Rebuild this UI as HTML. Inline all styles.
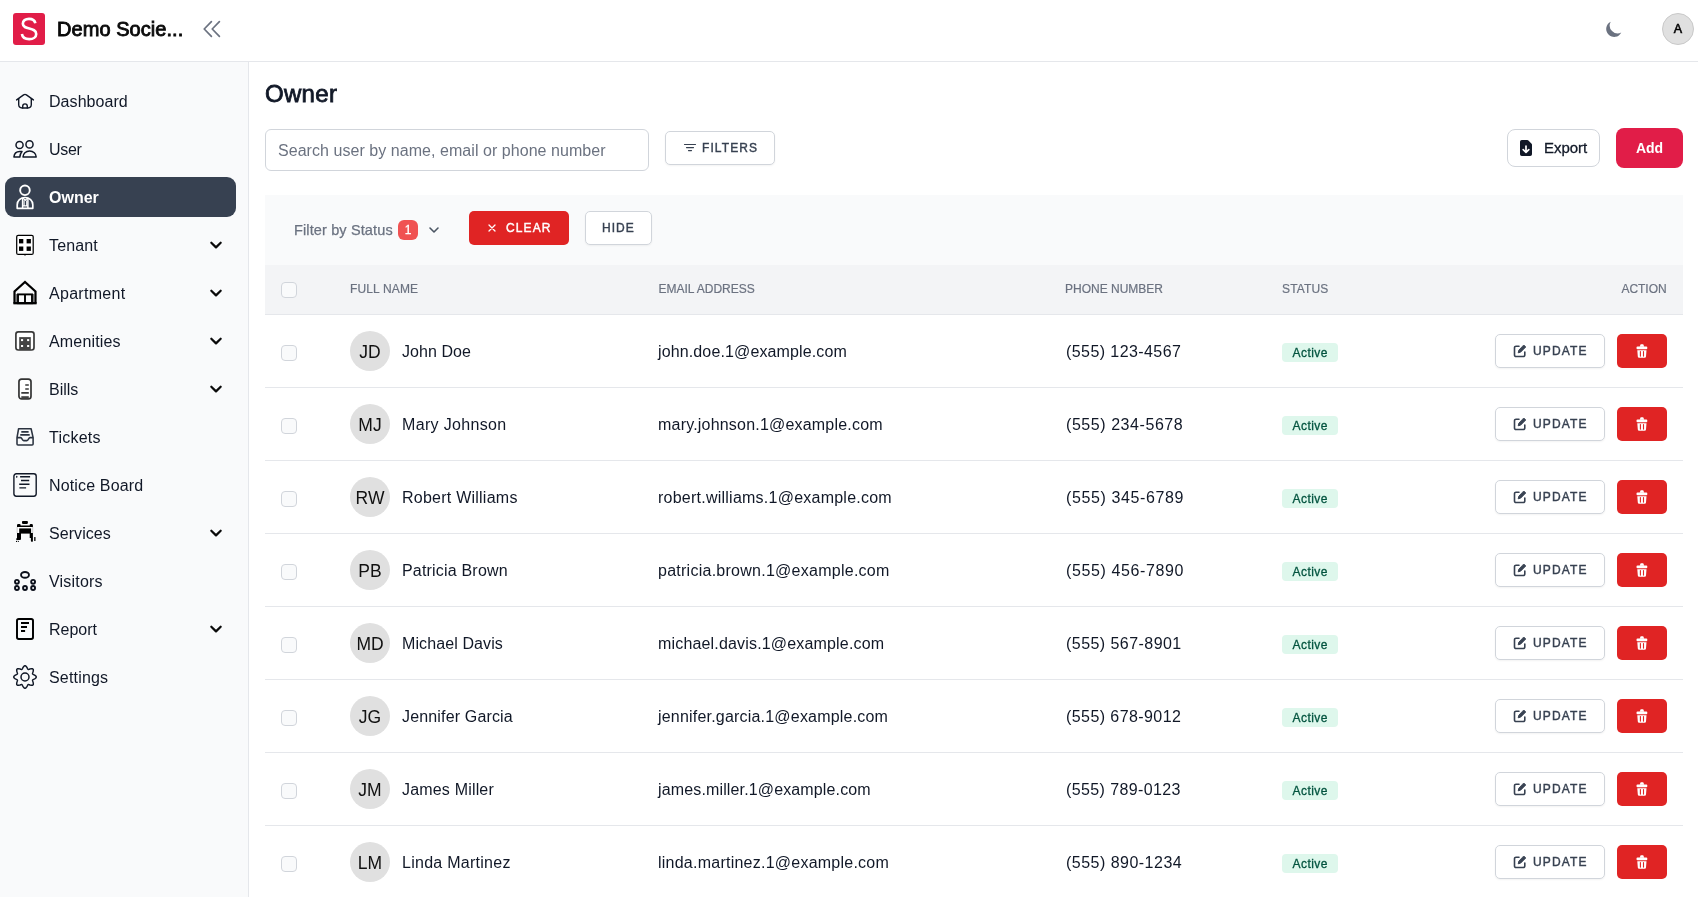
<!DOCTYPE html>
<html><head><meta charset="utf-8"><title>Owner</title>
<style>
*{box-sizing:border-box;margin:0;padding:0}
html,body{width:1698px;height:897px;overflow:hidden;background:#fff;font-family:"Liberation Sans",sans-serif;color:#111827}
.abs{position:absolute}
#w{position:absolute;left:0;top:0;width:1698px;height:897px;will-change:transform}
.md{font-weight:400;-webkit-text-stroke:0.4px currentColor}
#top{position:absolute;left:0;top:0;width:1698px;height:62px;background:#fff;border-bottom:1px solid #e5e7eb}
#side{position:absolute;left:0;top:62px;width:249px;height:835px;background:#f9fafb;border-right:1px solid #e5e7eb}
.logo{position:absolute;left:13px;top:13px;width:32px;height:32px;border-radius:3px;background:#e11d48}
.brand{position:absolute;left:57px;top:17px;font-size:20px;font-weight:400;-webkit-text-stroke:0.85px #0a0a0a;color:#0a0a0a;letter-spacing:0.05px;white-space:nowrap;line-height:24px}
.nav{position:absolute;left:49px;font-size:16px;color:#111827;white-space:nowrap;line-height:20px}
.ico{position:absolute;left:13px;width:24px;height:24px;overflow:visible}
.chev{position:absolute;left:208px;width:16px;height:16px}
#active{position:absolute;left:5px;top:177px;width:231px;height:40px;border-radius:9px;background:#374151}
h1{position:absolute;left:265px;top:80px;font-size:24px;font-weight:400;-webkit-text-stroke:0.8px #111827;color:#111827;letter-spacing:0.3px;line-height:28px}
.search{position:absolute;left:265px;top:129px;width:384px;height:42px;border:1px solid #d1d5db;border-radius:6px;background:#fff}
.search span{position:absolute;left:12px;top:11px;font-size:16px;color:#6b7280;white-space:nowrap;line-height:20px;letter-spacing:0.05px}
.btn{position:absolute;border:1px solid #d1d5db;border-radius:5px;background:#fff;box-shadow:0 1px 2px rgba(0,0,0,.05)}
.btn span{position:absolute;white-space:nowrap}
#fbar{position:absolute;left:265px;top:195px;width:1418px;height:70px;background:#f9fafb}
#thead{position:absolute;left:265px;top:265px;width:1418px;height:50px;background:#f3f4f6;border-bottom:1px solid #e5e7eb}
.th{position:absolute;top:282px;font-size:12px;color:#6b7280;-webkit-text-stroke:0.2px #6b7280;letter-spacing:0.15px;white-space:nowrap;line-height:14px}
.row{position:absolute;left:265px;width:1418px;height:73px;border-bottom:1px solid #e5e7eb}
.cb{position:absolute;left:16px;top:30px;width:16px;height:16px;border:1px solid #d1d5db;border-radius:4px;background:#f9fafb}
.av{position:absolute;left:85px;top:16px;width:40px;height:40px;border-radius:50%;background:#e0e0e0;text-align:center;line-height:42px;font-size:17.5px;color:#111}
.nm,.em,.ph{position:absolute;top:27px;font-size:16px;color:#111827;white-space:nowrap;line-height:20px}
.nm{left:137px;letter-spacing:0.15px}.em{left:393px;letter-spacing:0.2px}.ph{left:801px;letter-spacing:0.5px}
.st{position:absolute;left:1017px;top:28px;width:56px;height:19px;border-radius:4px;background:#def7ec;color:#03543f;font-size:12px;text-align:center;line-height:20px;letter-spacing:0.45px;text-indent:0.45px;-webkit-text-stroke:0.3px #03543f}
.up{position:absolute;left:1230px;top:19px;width:110px;height:34px;border:1px solid #d1d5db;border-radius:5px;background:#fff;box-shadow:0 1px 2px rgba(0,0,0,.05)}
.up span{position:absolute;left:37px;top:9px;font-size:12px;font-weight:400;-webkit-text-stroke:0.4px #374151;color:#374151;letter-spacing:1.15px;line-height:14px}
.up svg{position:absolute;left:17px;top:9px}
.del{position:absolute;left:1352px;top:19px;width:50px;height:34px;border-radius:5px;background:#e02424}
.del svg{position:absolute;left:19.3px;top:10px}
</style></head><body>
<div id="w">
<div id="top">
<div class="logo"><svg width="32" height="32" viewBox="0 0 32 32"><path transform="translate(16 16) scale(1.060) translate(-16.200 -16)" d="M22.2 10.6c-.5-2.6-2.8-4.2-6-4.2-3.4 0-5.8 1.8-5.8 4.6 0 6.200 12.600 2.900 12.600 9.600 0 3.100-2.800 5.000-6.600 5.000-3.700 0-6.400-1.800-6.900-4.800" fill="none" stroke="#fff" stroke-width="2.5"/></svg></div>
<div class="brand">Demo Socie...</div>
<svg class="abs" style="left:202px;top:19px" width="22" height="20" viewBox="0 0 22 20" fill="none" stroke="#6b7280" stroke-width="1.700" stroke-linecap="round" stroke-linejoin="round"><path d="M9.4 2.6L2.2 10l7.2 7.4"/><path d="M17.4 2.6L10.2 10l7.200 7.4"/></svg>
<svg class="abs" style="left:1604px;top:19px" width="20" height="20" viewBox="0 0 20 20"><path d="M17.3 13.6A8 8 0 0 1 6.7 2.7a8 8 0 1 0 10.6 10.9z" fill="#6b7280"/></svg>
<div class="abs" style="left:1662px;top:13px;width:32px;height:32px;border-radius:50%;background:#e0e0e0;border:1px solid #c9c9c9;text-align:center;line-height:31px;font-size:12.5px;color:#000;-webkit-text-stroke:0.55px #000">A</div>
</div>
<div id="side"></div>
<div id="active"></div>
<div class="nav" style="top:92px;letter-spacing:0.06px">Dashboard</div>
<div class="nav" style="top:140px;letter-spacing:-0.30px">User</div>
<div class="nav" style="top:188px;color:#fff;font-weight:700">Owner</div>
<div class="nav" style="top:236px;letter-spacing:0.15px">Tenant</div>
<svg class="chev" style="top:237px" viewBox="0 0 16 16" fill="none" stroke="#0a0a0a" stroke-width="2.2" stroke-linecap="round" stroke-linejoin="round"><path d="M3.300 5.700L8 10.400l4.700-4.700"/></svg>
<div class="nav" style="top:284px;letter-spacing:0.30px">Apartment</div>
<svg class="chev" style="top:285px" viewBox="0 0 16 16" fill="none" stroke="#0a0a0a" stroke-width="2.2" stroke-linecap="round" stroke-linejoin="round"><path d="M3.300 5.700L8 10.400l4.700-4.700"/></svg>
<div class="nav" style="top:332px;letter-spacing:0.16px">Amenities</div>
<svg class="chev" style="top:333px" viewBox="0 0 16 16" fill="none" stroke="#0a0a0a" stroke-width="2.2" stroke-linecap="round" stroke-linejoin="round"><path d="M3.300 5.700L8 10.400l4.700-4.700"/></svg>
<div class="nav" style="top:380px;letter-spacing:0.00px">Bills</div>
<svg class="chev" style="top:381px" viewBox="0 0 16 16" fill="none" stroke="#0a0a0a" stroke-width="2.2" stroke-linecap="round" stroke-linejoin="round"><path d="M3.300 5.700L8 10.400l4.700-4.700"/></svg>
<div class="nav" style="top:428px;letter-spacing:0.23px">Tickets</div>
<div class="nav" style="top:476px;letter-spacing:0.15px">Notice Board</div>
<div class="nav" style="top:524px;letter-spacing:0.07px">Services</div>
<svg class="chev" style="top:525px" viewBox="0 0 16 16" fill="none" stroke="#0a0a0a" stroke-width="2.2" stroke-linecap="round" stroke-linejoin="round"><path d="M3.300 5.700L8 10.400l4.700-4.700"/></svg>
<div class="nav" style="top:572px;letter-spacing:0.19px">Visitors</div>
<div class="nav" style="top:620px;letter-spacing:0.00px">Report</div>
<svg class="chev" style="top:621px" viewBox="0 0 16 16" fill="none" stroke="#0a0a0a" stroke-width="2.2" stroke-linecap="round" stroke-linejoin="round"><path d="M3.300 5.700L8 10.400l4.700-4.700"/></svg>
<div class="nav" style="top:668px;letter-spacing:0.18px">Settings</div>
<svg class="ico" style="top:89px" viewBox="0 0 24 24"><g fill="none" stroke="#111827" stroke-width="1.4" stroke-linecap="round" stroke-linejoin="round"><path d="M3.6 10.9 L10.6 5.9 Q12 4.9 13.4 5.9 L20.4 10.9"/><path d="M5.7 9.6V15.6a3.4 3.400 0 0 0 3.4 3.4H14.9a3.4 3.400 0 0 0 3.4-3.400V9.600"/><path d="M9.700 18.900v-1.700a2.300 2.300 0 0 1 4.600 0V18.900"/></g></svg>
<svg class="ico" style="top:137px" viewBox="0 0 24 24"><g fill="none" stroke="#111827" stroke-width="1.500" stroke-linejoin="round"><circle cx="6.550" cy="7.950" r="3.550"/><circle cx="16.500" cy="7.400" r="3.550"/><path d="M10 20.100c0-3.400 2.900-6.100 6.600-6.100s6.600 2.700 6.600 6.100z"/><path d="M0.900 20.100c0.300-3.300 2.700-5.600 5.900-5.600h2.200c-1.300 1.500-2 3.300-2.200 5.600z"/></g></svg>
<svg class="ico" style="top:185px" viewBox="0 0 24 24"><g fill="none" stroke="#fff" stroke-width="1.700" stroke-linejoin="round"><circle cx="11.950" cy="5.300" r="4.800" stroke-width="1.900"/><path d="M4.200 23.300v-3.500c0-4.300 3.300-7.300 7.800-7.300s7.800 3 7.800 7.300v3.500z"/><path d="M9.600 13V23M14.900 13V23" stroke-width="1.500"/><path d="M10 13l2.300 2.400L14.700 13M11.100 15.500v5.200M13.700 15.500v5.200M10 20.900h4.800" stroke-width="1.100"/></g></svg>
<svg class="ico" style="top:233px" viewBox="0 0 24 24"><rect x="3.700" y="2.300" width="16.500" height="19.100" rx="1.500" fill="#fff" stroke="#000" stroke-width="1.250"/><path d="M11 22.100h2" stroke="#000" stroke-width="0.600"/><g fill="#000"><rect x="6" y="6" width="4.300" height="4.400"/><rect x="13.600" y="6" width="4.300" height="4.400"/><rect x="6" y="13.500" width="4.300" height="4.400"/><rect x="13.600" y="13.500" width="4.300" height="4.400"/></g></svg>
<svg class="ico" style="top:281px" viewBox="0 0 24 24"><g fill="none" stroke="#000" stroke-linejoin="miter"><path d="M3.400 13V22M20.600 13V22" stroke="#777" stroke-width="1.400"/><path d="M1.500 22.500V10.500L12 1L22.500 10.500V22.500" stroke-width="2.200"/><path d="M0.400 22.200H23.600" stroke-width="2.300"/><rect x="5" y="13.400" width="14" height="8.800" stroke-width="1.900"/><path d="M12 13.400V22.500" stroke-width="1.900"/></g></svg>
<svg class="ico" style="top:329px" viewBox="0 0 24 24"><rect x="2.900" y="2.900" width="18.100" height="18.100" rx="2.400" fill="#fff" stroke="#3a3a3a" stroke-width="1.700"/><rect x="6.200" y="8.100" width="11.600" height="13" fill="#444"/><g fill="#fff"><rect x="8" y="10.100" width="2.100" height="2"/><rect x="14.100" y="10.100" width="2.100" height="2"/><rect x="8" y="16" width="2.100" height="2"/><rect x="14.100" y="16" width="2.100" height="2"/></g></svg>
<svg class="ico" style="top:377px" viewBox="0 0 24 24"><rect x="5.950" y="2.050" width="12.050" height="19.900" rx="2.700" fill="#fff" stroke="#333" stroke-width="1.700"/><rect x="8.300" y="19.200" width="7.500" height="2.500" fill="#444"/><path d="M12.250 8h3.550M12.250 12h3.550M8.300 15.900h7.500" stroke="#3a3a3a" stroke-width="1.600" fill="none"/></svg>
<svg class="ico" style="top:425px" viewBox="0 0 24 24"><g fill="none" stroke="#2b3340" stroke-width="1.550" stroke-linejoin="round"><path d="M5.600 3.750h12.500l2 8.850v6.400a1 1 0 0 1-1 1H5a1 1 0 0 1-1-1v-6.400z"/><path d="M4 12.600h3.700c1.300 0 1.300 3 3 3h3.200c1.700 0 1.700-3 3-3H20.100"/><path d="M8.300 6.900h7.300M7.250 9.900h9.450" stroke-width="1.600"/></g></svg>
<svg class="ico" style="top:473px" viewBox="0 0 24 24"><g fill="none" stroke="#111827" stroke-width="1.400"><rect x="0.900" y="0.800" width="22.300" height="22.400" rx="2.400"/><path d="M7.100 3.700h10M8 7.500h8.200M6.200 11.300h10.300M6.400 14.900h6.700" stroke-width="1.400"/></g><rect x="3.100" y="2.700" width="1.200" height="2.100" rx="0.600" fill="#111827"/></svg>
<svg class="ico" style="top:521px" viewBox="0 0 24 24"><g fill="#000"><rect x="9" y="0.100" width="5.900" height="2.800" rx="0.800"/><path d="M4 6V4.300a1.200 1.200 0 0 1 1.200-1.200H6.600a1 1 0 0 1 1 1v0.400H16.700v-0.400a1 1 0 0 1 1-1H18.700a1.200 1.200 0 0 1 1.200 1.200V6z"/><rect x="4" y="6" width="15.900" height="6.500" fill="#fff"/><path d="M4.200 6v6M19.700 6v6" stroke="#999" stroke-width="0.500"/><rect x="6.200" y="7.400" width="11.900" height="5.200"/><path d="M4 11.900h4v6.200a1 1 0 0 1-1 1H4.600a1.200 1.200 0 0 1-1.400-1.400c0.300-0.600 0.800-0.400 0.800-1z"/><path d="M16.700 11.900h3.200v8a0.900 0.900 0 0 1-0.900 0.900h-0.300a0.800 0.800 0 0 1-0.800-0.800V16.900h-1.200z"/><circle cx="3.500" cy="20.400" r="0.550"/><circle cx="5.300" cy="20.400" r="0.550"/><rect x="21.200" y="16.100" width="1.300" height="3.900" rx="0.500"/></g></svg>
<svg class="ico" style="top:569px" viewBox="0 0 24 24"><g fill="none" stroke="#0b0f1a" stroke-width="1.900"><ellipse cx="12" cy="5.900" rx="3.950" ry="2.900"/><circle cx="3.950" cy="12.800" r="1.950"/><circle cx="3.950" cy="19" r="1.950"/><circle cx="12" cy="19" r="1.950"/><circle cx="20.100" cy="12.800" r="1.950"/><circle cx="20.100" cy="19" r="1.950"/></g></svg>
<svg class="ico" style="top:617px" viewBox="0 0 24 24"><rect x="4" y="2" width="16" height="20" rx="1.800" fill="none" stroke="#000" stroke-width="1.950"/><path d="M8 6h8M8 10h6M8 14h4.100" stroke="#000" stroke-width="2" fill="none"/></svg>
<svg class="ico" style="top:665px" viewBox="0 0 24 24"><g fill="none" stroke="#111827" stroke-width="1.450" stroke-linejoin="round"><path d="M12.00 0.70 L12.44 0.81 L12.86 1.09 L13.24 1.50 L13.59 1.96 L13.90 2.44 L14.18 2.92 L14.42 3.41 L14.65 3.86 L14.87 4.22 L15.14 4.42 L15.47 4.47 L15.89 4.37 L16.36 4.21 L16.88 4.04 L17.42 3.89 L17.97 3.78 L18.54 3.70 L19.10 3.68 L19.60 3.77 L19.99 4.01 L20.23 4.40 L20.32 4.90 L20.30 5.46 L20.22 6.03 L20.11 6.58 L19.96 7.12 L19.79 7.64 L19.63 8.11 L19.53 8.53 L19.58 8.86 L19.78 9.13 L20.14 9.35 L20.59 9.58 L21.08 9.82 L21.56 10.10 L22.04 10.41 L22.50 10.76 L22.91 11.14 L23.19 11.56 L23.30 12.00 L23.19 12.44 L22.91 12.86 L22.50 13.24 L22.04 13.59 L21.56 13.90 L21.08 14.18 L20.59 14.42 L20.14 14.65 L19.78 14.87 L19.58 15.14 L19.53 15.47 L19.63 15.89 L19.79 16.36 L19.96 16.88 L20.11 17.42 L20.22 17.97 L20.30 18.54 L20.32 19.10 L20.23 19.60 L19.99 19.99 L19.60 20.23 L19.10 20.32 L18.54 20.30 L17.97 20.22 L17.42 20.11 L16.88 19.96 L16.36 19.79 L15.89 19.63 L15.47 19.53 L15.14 19.58 L14.87 19.78 L14.65 20.14 L14.42 20.59 L14.18 21.08 L13.90 21.56 L13.59 22.04 L13.24 22.50 L12.86 22.91 L12.44 23.19 L12.00 23.30 L11.56 23.19 L11.14 22.91 L10.76 22.50 L10.41 22.04 L10.10 21.56 L9.82 21.08 L9.58 20.59 L9.35 20.14 L9.13 19.78 L8.86 19.58 L8.53 19.53 L8.11 19.63 L7.64 19.79 L7.12 19.96 L6.58 20.11 L6.03 20.22 L5.46 20.30 L4.90 20.32 L4.40 20.23 L4.01 19.99 L3.77 19.60 L3.68 19.10 L3.70 18.54 L3.78 17.97 L3.89 17.42 L4.04 16.88 L4.21 16.36 L4.37 15.89 L4.47 15.47 L4.42 15.14 L4.22 14.87 L3.86 14.65 L3.41 14.42 L2.92 14.18 L2.44 13.90 L1.96 13.59 L1.50 13.24 L1.09 12.86 L0.81 12.44 L0.70 12.00 L0.81 11.56 L1.09 11.14 L1.50 10.76 L1.96 10.41 L2.44 10.10 L2.92 9.82 L3.41 9.58 L3.86 9.35 L4.22 9.13 L4.42 8.86 L4.47 8.53 L4.37 8.11 L4.21 7.64 L4.04 7.12 L3.89 6.58 L3.78 6.03 L3.70 5.46 L3.68 4.90 L3.77 4.40 L4.01 4.01 L4.40 3.77 L4.90 3.68 L5.46 3.70 L6.03 3.78 L6.58 3.89 L7.12 4.04 L7.64 4.21 L8.11 4.37 L8.53 4.47 L8.86 4.42 L9.13 4.22 L9.35 3.86 L9.58 3.41 L9.82 2.92 L10.10 2.44 L10.41 1.96 L10.76 1.50 L11.14 1.09 L11.56 0.81Z"/><circle cx="12" cy="12" r="4" stroke-width="1.500"/></g></svg>
<h1>Owner</h1>
<div class="search"><span>Search user by name, email or phone number</span></div>
<div class="btn" style="left:665px;top:131px;width:110px;height:34px"><svg class="abs" style="left:17px;top:10px" width="14" height="12" viewBox="0 0 14 12" stroke="#374151" stroke-width="1.2" stroke-linecap="round"><path d="M1.5 2.5h11M3.5 5.600h7M5.500 8.600h3"/></svg><span style="left:36px;top:9px;font-size:12px;font-weight:400;-webkit-text-stroke:0.4px #374151;color:#374151;letter-spacing:1.1px;line-height:14px">FILTERS</span></div>
<div class="btn" style="left:1507px;top:129px;width:93px;height:38px;border-radius:8px;box-shadow:none"><svg class="abs" style="left:11px;top:8.500px" width="14" height="18" viewBox="0 0 14 18"><path d="M1 2.800A1.800 1.800 0 0 1 2.800 1H8.300a1.500 1.500 0 0 1 1.100 0.500L12.600 4.800a1.500 1.500 0 0 1 0.400 1V15.200A1.800 1.800 0 0 1 11.200 17H2.800A1.800 1.800 0 0 1 1 15.200z" fill="#111827"/><path d="M7 7v6.200M4.200 10.600L7 13.400l2.800-2.800" stroke="#fff" stroke-width="1.700" fill="none" stroke-linecap="round" stroke-linejoin="round"/></svg><span style="left:36px;top:9px;font-size:15px;color:#111827;line-height:18px;-webkit-text-stroke:0.3px #111827;letter-spacing:-0.05px">Export</span></div>
<div class="abs" style="left:1616px;top:128px;width:67px;height:40px;border-radius:8px;background:#e11d48;color:#fff;font-weight:700;font-size:14px;text-align:center;line-height:40px">Add</div>
<div id="fbar">
<div class="abs" style="left:29px;top:26px;font-size:14.5px;color:#6b7280;white-space:nowrap;line-height:18px;letter-spacing:0.13px;-webkit-text-stroke:0.25px #6b7280">Filter by Status</div>
<div class="abs" style="left:133px;top:25px;width:20px;height:20px;border-radius:6px;background:#f05252;color:#fff;font-size:12px;text-align:center;line-height:20px;-webkit-text-stroke:0.3px #fff">1</div>
<svg class="abs" style="left:162px;top:29px" width="14" height="12" viewBox="0 0 14 12" fill="none" stroke="#4b5563" stroke-width="1.6" stroke-linecap="round" stroke-linejoin="round"><path d="M3 4l4 4 4-4"/></svg>
<div class="abs" style="left:204px;top:16px;width:100px;height:34px;border-radius:5px;background:#e02424"><svg class="abs" style="left:18px;top:12px" width="10" height="10" viewBox="0 0 10 10" stroke="#fff" stroke-width="1.3" stroke-linecap="round"><path d="M2 2l6 6M8 2l-6 6"/></svg><span class="abs" style="left:37px;top:10px;font-size:12px;font-weight:400;-webkit-text-stroke:0.4px #fff;color:#fff;letter-spacing:1.1px;line-height:14px">CLEAR</span></div>
<div class="btn" style="left:320px;top:16px;width:67px;height:34px"><span style="left:16px;top:9px;font-size:12px;font-weight:400;-webkit-text-stroke:0.4px #374151;color:#374151;letter-spacing:1.05px;line-height:14px">HIDE</span></div>
</div>
<div id="thead"><div class="cb" style="top:17px"></div></div>
<div class="th" style="left:350px">FULL NAME</div>
<div class="th" style="left:658.500px;letter-spacing:0px">EMAIL ADDRESS</div>
<div class="th" style="left:1065px;letter-spacing:0px">PHONE NUMBER</div>
<div class="th" style="left:1282px">STATUS</div>
<div class="th" style="left:1621.500px;letter-spacing:-0.050px">ACTION</div>
<div class="row" style="top:315px"><div class="cb"></div><div class="av">JD</div><div class="nm" style="letter-spacing:0.07px">John Doe</div><div class="em" style="letter-spacing:0.13px">john.doe.1@example.com</div><div class="ph" style="letter-spacing:0.42px">(555) 123-4567</div><div class="st">Active</div><div class="up"><svg width="14" height="14" viewBox="0 0 14 14" fill="none" stroke="#374151" stroke-width="1.600" stroke-linecap="round" stroke-linejoin="round"><path d="M6 2.200H3A1.500 1.500 0 0 0 1.500 3.700v7.300A1.500 1.500 0 0 0 3 12.500h7.300a1.500 1.500 0 0 0 1.500-1.500V8"/><path d="M11 1.300l1.700 1.700-5.200 5.200-2.300.6.600-2.300z" fill="#374151" stroke-width="1"/></svg><span>UPDATE</span></div><div class="del"><svg width="12" height="14" viewBox="0 0 12 14"><path d="M3.700 2.700L4.500 0.600a0.600 0.600 0 0 1 0.500-0.400h1.900a0.600 0.600 0 0 1 0.500 0.400L8.200 2.700z" fill="#fff"/><rect x="0.500" y="2.400" width="10.800" height="2.800" rx="1" fill="#fff"/><path d="M1.300 6.200h9.200l-0.500 6.300a1.400 1.400 0 0 1-1.400 1.300h-5.400a1.400 1.400 0 0 1-1.400-1.300z" fill="#fff"/><path d="M4.400 7.500v4.600M7.500 7.500v4.600" stroke="#e02424" stroke-width="1.100" stroke-linecap="round"/></svg></div></div>
<div class="row" style="top:388px"><div class="cb"></div><div class="av">MJ</div><div class="nm" style="letter-spacing:0.33px">Mary Johnson</div><div class="em" style="letter-spacing:0.20px">mary.johnson.1@example.com</div><div class="ph" style="letter-spacing:0.56px">(555) 234-5678</div><div class="st">Active</div><div class="up"><svg width="14" height="14" viewBox="0 0 14 14" fill="none" stroke="#374151" stroke-width="1.600" stroke-linecap="round" stroke-linejoin="round"><path d="M6 2.200H3A1.500 1.500 0 0 0 1.500 3.700v7.300A1.500 1.500 0 0 0 3 12.500h7.300a1.500 1.500 0 0 0 1.500-1.500V8"/><path d="M11 1.300l1.700 1.700-5.200 5.200-2.300.6.600-2.300z" fill="#374151" stroke-width="1"/></svg><span>UPDATE</span></div><div class="del"><svg width="12" height="14" viewBox="0 0 12 14"><path d="M3.700 2.700L4.500 0.600a0.600 0.600 0 0 1 0.500-0.400h1.900a0.600 0.600 0 0 1 0.500 0.400L8.200 2.700z" fill="#fff"/><rect x="0.500" y="2.400" width="10.800" height="2.800" rx="1" fill="#fff"/><path d="M1.300 6.200h9.200l-0.500 6.300a1.400 1.400 0 0 1-1.400 1.300h-5.400a1.400 1.400 0 0 1-1.400-1.300z" fill="#fff"/><path d="M4.400 7.500v4.600M7.500 7.500v4.600" stroke="#e02424" stroke-width="1.100" stroke-linecap="round"/></svg></div></div>
<div class="row" style="top:461px"><div class="cb"></div><div class="av">RW</div><div class="nm" style="letter-spacing:0.24px">Robert Williams</div><div class="em" style="letter-spacing:0.24px">robert.williams.1@example.com</div><div class="ph" style="letter-spacing:0.62px">(555) 345-6789</div><div class="st">Active</div><div class="up"><svg width="14" height="14" viewBox="0 0 14 14" fill="none" stroke="#374151" stroke-width="1.600" stroke-linecap="round" stroke-linejoin="round"><path d="M6 2.200H3A1.500 1.500 0 0 0 1.500 3.700v7.300A1.500 1.500 0 0 0 3 12.500h7.300a1.500 1.500 0 0 0 1.500-1.500V8"/><path d="M11 1.300l1.700 1.700-5.200 5.200-2.300.6.600-2.300z" fill="#374151" stroke-width="1"/></svg><span>UPDATE</span></div><div class="del"><svg width="12" height="14" viewBox="0 0 12 14"><path d="M3.700 2.700L4.500 0.600a0.600 0.600 0 0 1 0.500-0.400h1.900a0.600 0.600 0 0 1 0.500 0.400L8.200 2.700z" fill="#fff"/><rect x="0.500" y="2.400" width="10.800" height="2.800" rx="1" fill="#fff"/><path d="M1.300 6.200h9.200l-0.500 6.300a1.400 1.400 0 0 1-1.400 1.300h-5.400a1.400 1.400 0 0 1-1.400-1.300z" fill="#fff"/><path d="M4.400 7.500v4.600M7.500 7.500v4.600" stroke="#e02424" stroke-width="1.100" stroke-linecap="round"/></svg></div></div>
<div class="row" style="top:534px"><div class="cb"></div><div class="av">PB</div><div class="nm" style="letter-spacing:0.19px">Patricia Brown</div><div class="em" style="letter-spacing:0.26px">patricia.brown.1@example.com</div><div class="ph" style="letter-spacing:0.62px">(555) 456-7890</div><div class="st">Active</div><div class="up"><svg width="14" height="14" viewBox="0 0 14 14" fill="none" stroke="#374151" stroke-width="1.600" stroke-linecap="round" stroke-linejoin="round"><path d="M6 2.200H3A1.500 1.500 0 0 0 1.500 3.700v7.300A1.500 1.500 0 0 0 3 12.500h7.300a1.500 1.500 0 0 0 1.500-1.500V8"/><path d="M11 1.300l1.700 1.700-5.200 5.200-2.300.6.600-2.300z" fill="#374151" stroke-width="1"/></svg><span>UPDATE</span></div><div class="del"><svg width="12" height="14" viewBox="0 0 12 14"><path d="M3.700 2.700L4.500 0.600a0.600 0.600 0 0 1 0.500-0.400h1.900a0.600 0.600 0 0 1 0.500 0.400L8.200 2.700z" fill="#fff"/><rect x="0.500" y="2.400" width="10.800" height="2.800" rx="1" fill="#fff"/><path d="M1.300 6.200h9.200l-0.500 6.300a1.400 1.400 0 0 1-1.400 1.300h-5.400a1.400 1.400 0 0 1-1.400-1.300z" fill="#fff"/><path d="M4.400 7.500v4.600M7.500 7.500v4.600" stroke="#e02424" stroke-width="1.100" stroke-linecap="round"/></svg></div></div>
<div class="row" style="top:607px"><div class="cb"></div><div class="av">MD</div><div class="nm" style="letter-spacing:0.10px">Michael Davis</div><div class="em" style="letter-spacing:0.17px">michael.davis.1@example.com</div><div class="ph" style="letter-spacing:0.45px">(555) 567-8901</div><div class="st">Active</div><div class="up"><svg width="14" height="14" viewBox="0 0 14 14" fill="none" stroke="#374151" stroke-width="1.600" stroke-linecap="round" stroke-linejoin="round"><path d="M6 2.200H3A1.500 1.500 0 0 0 1.500 3.700v7.300A1.500 1.500 0 0 0 3 12.500h7.300a1.500 1.500 0 0 0 1.500-1.500V8"/><path d="M11 1.300l1.700 1.700-5.200 5.200-2.300.6.600-2.300z" fill="#374151" stroke-width="1"/></svg><span>UPDATE</span></div><div class="del"><svg width="12" height="14" viewBox="0 0 12 14"><path d="M3.700 2.700L4.500 0.600a0.600 0.600 0 0 1 0.500-0.400h1.900a0.600 0.600 0 0 1 0.500 0.400L8.200 2.700z" fill="#fff"/><rect x="0.500" y="2.400" width="10.800" height="2.800" rx="1" fill="#fff"/><path d="M1.300 6.200h9.200l-0.500 6.300a1.400 1.400 0 0 1-1.400 1.300h-5.400a1.400 1.400 0 0 1-1.400-1.300z" fill="#fff"/><path d="M4.400 7.500v4.600M7.500 7.500v4.600" stroke="#e02424" stroke-width="1.100" stroke-linecap="round"/></svg></div></div>
<div class="row" style="top:680px"><div class="cb"></div><div class="av">JG</div><div class="nm" style="letter-spacing:0.16px">Jennifer Garcia</div><div class="em" style="letter-spacing:0.20px">jennifer.garcia.1@example.com</div><div class="ph" style="letter-spacing:0.42px">(555) 678-9012</div><div class="st">Active</div><div class="up"><svg width="14" height="14" viewBox="0 0 14 14" fill="none" stroke="#374151" stroke-width="1.600" stroke-linecap="round" stroke-linejoin="round"><path d="M6 2.200H3A1.500 1.500 0 0 0 1.500 3.700v7.300A1.500 1.500 0 0 0 3 12.500h7.300a1.500 1.500 0 0 0 1.500-1.500V8"/><path d="M11 1.300l1.700 1.700-5.200 5.200-2.300.6.600-2.300z" fill="#374151" stroke-width="1"/></svg><span>UPDATE</span></div><div class="del"><svg width="12" height="14" viewBox="0 0 12 14"><path d="M3.700 2.700L4.500 0.600a0.600 0.600 0 0 1 0.500-0.400h1.900a0.600 0.600 0 0 1 0.500 0.400L8.200 2.700z" fill="#fff"/><rect x="0.500" y="2.400" width="10.800" height="2.800" rx="1" fill="#fff"/><path d="M1.300 6.200h9.200l-0.500 6.300a1.400 1.400 0 0 1-1.400 1.300h-5.400a1.400 1.400 0 0 1-1.400-1.300z" fill="#fff"/><path d="M4.400 7.500v4.600M7.500 7.500v4.600" stroke="#e02424" stroke-width="1.100" stroke-linecap="round"/></svg></div></div>
<div class="row" style="top:753px"><div class="cb"></div><div class="av">JM</div><div class="nm" style="letter-spacing:0.18px">James Miller</div><div class="em" style="letter-spacing:0.14px">james.miller.1@example.com</div><div class="ph" style="letter-spacing:0.39px">(555) 789-0123</div><div class="st">Active</div><div class="up"><svg width="14" height="14" viewBox="0 0 14 14" fill="none" stroke="#374151" stroke-width="1.600" stroke-linecap="round" stroke-linejoin="round"><path d="M6 2.200H3A1.500 1.500 0 0 0 1.500 3.700v7.300A1.500 1.500 0 0 0 3 12.500h7.300a1.500 1.500 0 0 0 1.500-1.500V8"/><path d="M11 1.300l1.700 1.700-5.200 5.200-2.300.6.600-2.300z" fill="#374151" stroke-width="1"/></svg><span>UPDATE</span></div><div class="del"><svg width="12" height="14" viewBox="0 0 12 14"><path d="M3.700 2.700L4.500 0.600a0.600 0.600 0 0 1 0.500-0.400h1.900a0.600 0.600 0 0 1 0.500 0.400L8.200 2.700z" fill="#fff"/><rect x="0.500" y="2.400" width="10.800" height="2.800" rx="1" fill="#fff"/><path d="M1.300 6.200h9.200l-0.500 6.300a1.400 1.400 0 0 1-1.400 1.300h-5.400a1.400 1.400 0 0 1-1.400-1.300z" fill="#fff"/><path d="M4.400 7.500v4.600M7.500 7.500v4.600" stroke="#e02424" stroke-width="1.100" stroke-linecap="round"/></svg></div></div>
<div class="row" style="top:826px"><div class="cb"></div><div class="av">LM</div><div class="nm" style="letter-spacing:0.27px">Linda Martinez</div><div class="em" style="letter-spacing:0.24px">linda.martinez.1@example.com</div><div class="ph" style="letter-spacing:0.48px">(555) 890-1234</div><div class="st">Active</div><div class="up"><svg width="14" height="14" viewBox="0 0 14 14" fill="none" stroke="#374151" stroke-width="1.600" stroke-linecap="round" stroke-linejoin="round"><path d="M6 2.200H3A1.500 1.500 0 0 0 1.500 3.700v7.300A1.500 1.500 0 0 0 3 12.500h7.300a1.500 1.500 0 0 0 1.500-1.500V8"/><path d="M11 1.300l1.700 1.700-5.200 5.200-2.300.6.600-2.300z" fill="#374151" stroke-width="1"/></svg><span>UPDATE</span></div><div class="del"><svg width="12" height="14" viewBox="0 0 12 14"><path d="M3.700 2.700L4.500 0.600a0.600 0.600 0 0 1 0.500-0.400h1.900a0.600 0.600 0 0 1 0.500 0.400L8.200 2.700z" fill="#fff"/><rect x="0.500" y="2.400" width="10.800" height="2.800" rx="1" fill="#fff"/><path d="M1.300 6.200h9.200l-0.500 6.300a1.400 1.400 0 0 1-1.400 1.300h-5.400a1.400 1.400 0 0 1-1.400-1.300z" fill="#fff"/><path d="M4.400 7.500v4.600M7.500 7.500v4.600" stroke="#e02424" stroke-width="1.100" stroke-linecap="round"/></svg></div></div>
</div>
</body></html>
